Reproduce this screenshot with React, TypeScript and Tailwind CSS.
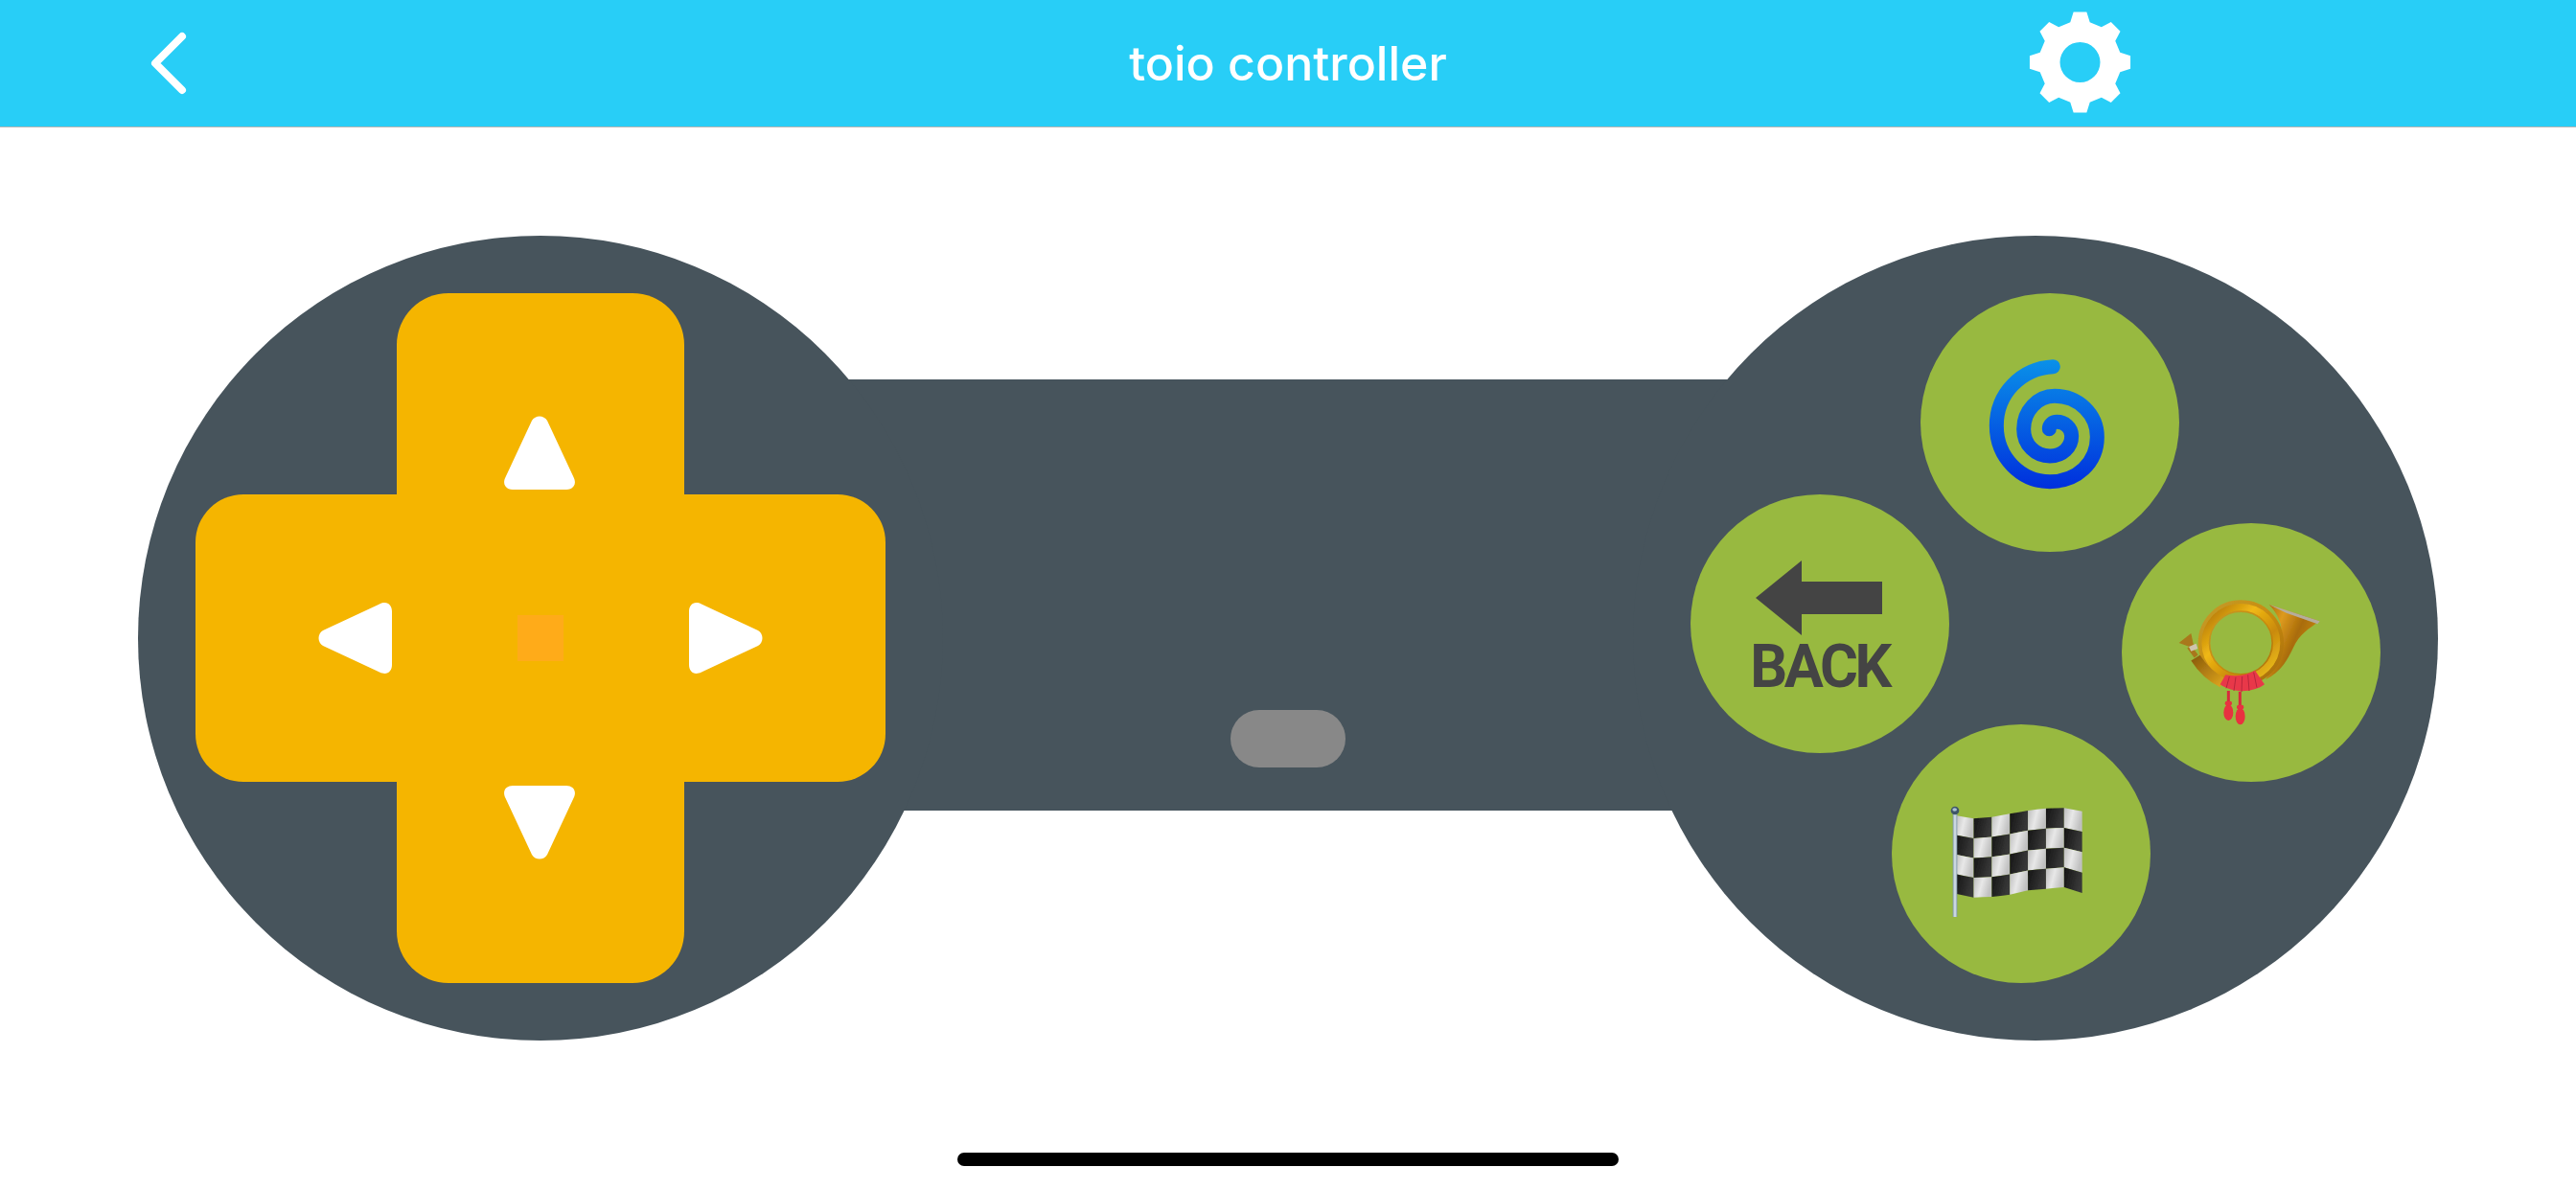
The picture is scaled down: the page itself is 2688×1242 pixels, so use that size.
const FLAG_TOP: [number, number][] = [[215,300],[270,310],[330,305],[385,295],[440,285],[500,278],[555,277],[611,287]];
const FLAG_BOT: [number, number][] = [[215,545],[270,557],[330,555],[385,548],[440,535],[500,530],[555,525],[611,543]];

function lerpEdge(edge: [number, number][], x: number) {
  for (let i = 0; i < edge.length - 1; i++) {
    if (x <= edge[i + 1][0]) {
      const t = (x - edge[i][0]) / (edge[i + 1][0] - edge[i][0]);
      return edge[i][1] + t * (edge[i + 1][1] - edge[i][1]);
    }
  }
  return edge[edge.length - 1][1];
}

function FlagIcon() {
  const cols = 7;
  const rows = 4;
  const cw = (611 - 215) / cols;
  const cells = [];
  for (let c = 0; c < cols; c++) {
    for (let r = 0; r < rows; r++) {
      const x0 = 215 + c * cw;
      const x1 = x0 + cw;
      const xm = (x0 + x1) / 2;
      const y = (x: number, k: number) => {
        const t = lerpEdge(FLAG_TOP, x);
        const b = lerpEdge(FLAG_BOT, x);
        return t + ((b - t) * k) / rows;
      };
      const pts = `${x0},${y(x0, r)} ${xm},${y(xm, r)} ${x1},${y(x1, r)} ${x1},${y(x1, r + 1)} ${xm},${y(xm, r + 1)} ${x0},${y(x0, r + 1)}`;
      cells.push(<polygon key={`${c}-${r}`} points={pts} fill={(c + r) % 2 === 0 ? "url(#flagLight)" : "url(#flagDark)"} />);
    }
  }
  return (
    <svg viewBox="0 0 840 840" className="w-[280px] h-[280px] shrink-0">
      <defs>
        <linearGradient id="flagLight" x1="0" y1="0" x2="1" y2="0.3">
          <stop offset="0" stopColor="#bcbcbc" />
          <stop offset="0.5" stopColor="#e8e8e8" />
          <stop offset="1" stopColor="#c0c0c0" />
        </linearGradient>
        <linearGradient id="flagDark" x1="0" y1="0" x2="1" y2="0.3">
          <stop offset="0" stopColor="#151515" />
          <stop offset="0.6" stopColor="#2a2a2a" />
          <stop offset="1" stopColor="#383838" />
        </linearGradient>
        <linearGradient id="pole" x1="0" y1="0" x2="1" y2="0">
          <stop offset="0" stopColor="#7f97a8" />
          <stop offset="0.5" stopColor="#dfe8ee" />
          <stop offset="1" stopColor="#7f97a8" />
        </linearGradient>
        <filter id="flagBlur" x="-5%" y="-5%" width="110%" height="110%">
          <feGaussianBlur stdDeviation="2" />
        </filter>
      </defs>
      <g filter="url(#flagBlur)">{cells}</g>
      <rect x="206" y="294" width="14" height="324" fill="url(#pole)" />
      <circle cx="213" cy="285" r="13" fill="#3f5568" />
      <ellipse cx="212" cy="282" rx="7" ry="5" fill="#a9c0d2" />
    </svg>
  );
}

function HornIcon() {
  return (
    <svg viewBox="0 0 840 840" className="w-[280px] h-[280px] shrink-0">
      <defs>
        <linearGradient id="ringBase" x1="0" y1="0" x2="1" y2="1">
          <stop offset="0" stopColor="#c39a28" />
          <stop offset="0.5" stopColor="#c98c10" />
          <stop offset="1" stopColor="#a86e08" />
        </linearGradient>
        <linearGradient id="ring" x1="0" y1="0" x2="1" y2="1">
          <stop offset="0" stopColor="#a96c08" />
          <stop offset="0.35" stopColor="#f0b814" />
          <stop offset="0.65" stopColor="#c98a0a" />
          <stop offset="1" stopColor="#f2c622" />
        </linearGradient>
        <linearGradient id="bell" x1="0" y1="0" x2="1" y2="0.6">
          <stop offset="0" stopColor="#a86606" />
          <stop offset="0.3" stopColor="#dd9a1e" />
          <stop offset="0.6" stopColor="#a96c0a" />
          <stop offset="1" stopColor="#cf9018" />
        </linearGradient>
        <linearGradient id="tube" x1="0" y1="0" x2="1" y2="1">
          <stop offset="0" stopColor="#8f5f0c" />
          <stop offset="1" stopColor="#d9a01c" />
        </linearGradient>
        <filter id="hornBlur" x="-5%" y="-5%" width="110%" height="110%">
          <feGaussianBlur stdDeviation="1.5" />
        </filter>
      </defs>
      <g filter="url(#hornBlur)">
        <path d="M476 270 L635 322 C600 345 570 365 552 405 C535 440 515 480 465 505 C510 440 525 380 512 330 C505 305 490 285 476 270 Z" fill="url(#bell)" />
        <path d="M476 270 L635 322 L628 331 L530 296 Z" fill="#b5ad9c" />
        <circle cx="388" cy="390" r="115" fill="none" stroke="url(#ringBase)" strokeWidth="38" />
        <circle cx="388" cy="390" r="112" fill="none" stroke="url(#ring)" strokeWidth="22" />
        <path d="M330 514 C295 497 268 472 246 437" fill="none" stroke="url(#tube)" strokeWidth="33" />
        <path d="M248 432 L226 402" fill="none" stroke="#a9761a" strokeWidth="15" />
        <path d="M194 390 L232 360 L242 407 Z" fill="#a9781a" />
        <path d="M225 402 L248 392 L253 408 L232 416 Z" fill="#cfc4ad" />
        <path d="M323 520 L340 490 C370 496 405 492 432 476 L462 520 C430 545 365 550 323 520 Z" fill="#e8384a" />
        <g stroke="#b8263a" strokeWidth="3" fill="none">
          <path d="M352 495 L342 532" />
          <path d="M372 497 L366 540" />
          <path d="M392 495 L390 543" />
          <path d="M410 490 L414 540" />
          <path d="M428 482 L438 530" />
        </g>
        <path d="M349 540 V578 M385 542 V590" stroke="#d8293c" strokeWidth="9" fill="none" />
        <ellipse cx="349" cy="608" rx="15" ry="25" fill="#e8303f" />
        <ellipse cx="386" cy="620" rx="15" ry="26" fill="#e8303f" />
        <rect x="338" y="572" width="22" height="14" rx="6" fill="#e8303f" />
        <rect x="375" y="584" width="22" height="14" rx="6" fill="#e8303f" />
      </g>
    </svg>
  );
}

function SpiralIcon() {
  return (
    <svg viewBox="0 0 840 840" className="w-[280px] h-[280px] shrink-0">
      <defs>
        <linearGradient id="spiral" gradientUnits="userSpaceOnUse" x1="0" y1="225" x2="0" y2="628">
          <stop offset="0" stopColor="#0a90e8" />
          <stop offset="1" stopColor="#002fdd" />
        </linearGradient>
      </defs>
      <path
        d="M430 245 C330 250 253 330 253 430 C253 530 330 605 420 605 C505 605 568 545 568 465 C568 395 510 337 435 337 C380 337 338 385 338 440 C338 490 375 525 420 525 C460 525 488 497 488 462 C488 435 465 418 442 418 C428 418 418 428 418 440"
        fill="none"
        stroke="url(#spiral)"
        strokeWidth="45"
        strokeLinecap="round"
      />
    </svg>
  );
}

function BackIcon() {
  return (
    <div className="flex flex-col items-center">
      <svg viewBox="0 0 132 78" className="w-[132px] h-[78px] mr-[2px]">
        <polygon points="0,39 48,0 48,22 132,22 132,56 48,56 48,78" fill="#444444" />
      </svg>
      <span className="mt-[10px] font-['Roboto',sans-serif] font-bold text-[63px] leading-[45px] tracking-[-3.5px] scale-x-[0.97] text-[#444444]">BACK</span>
    </div>
  );
}

function Triangle({ dir }: { dir: "up" | "down" | "left" | "right" }) {
  const rotate = { up: "rotate-0", right: "rotate-90", down: "rotate-180", left: "-rotate-90" }[dir];
  return (
    <svg viewBox="0 0 76 78" className={`w-[76px] h-[78px] ${rotate}`}>
      <path
        d="M30 5 C33.500 -1 42.500 -1 46 5 L73.500 64 C77.500 72 72.500 77 66 77 L10 77 C3.500 77 -1.500 72 2.500 64 Z"
        fill="#ffffff"
      />
    </svg>
  );
}

function Gear() {
  const cx = 53.5;
  const cy = 53;
  const teeth = 8;
  let d = "";
  for (let i = 0; i < teeth; i++) {
    const a = (i * 2 * Math.PI) / teeth - Math.PI / 2;
    const p = (r: number, da: number) => {
      const x = cx + r * Math.cos(a + da);
      const y = cy + r * Math.sin(a + da);
      return `${x.toFixed(2)} ${y.toFixed(2)}`;
    };
    d += `${i === 0 ? "M" : "L"}${p(43, -0.24)} L${p(53, -0.13)} L${p(53, 0.13)} L${p(43, 0.24)} `;
  }
  d += `Z M${cx + 21} ${cy} A21 21 0 1 0 ${cx - 21} ${cy} A21 21 0 1 0 ${cx + 21} ${cy} Z`;
  return (
    <svg viewBox="0 0 107 106" className="w-[107px] h-[106px] -mt-[2px]">
      <path d={d} fill="#ffffff" fillRule="evenodd" />
    </svg>
  );
}

function FaceButton({ className, children }: { className: string; children: React.ReactNode }) {
  return (
    <div className={`absolute w-[270px] h-[270px] rounded-full bg-[#98b940] flex items-center justify-center ${className}`}>
      {children}
    </div>
  );
}

export default function App() {
  return (
    <div className="w-[2688px] h-[1242px] bg-white flex flex-col overflow-hidden relative font-['Inter',sans-serif]">
      <header className="h-[133px] shrink-0 bg-[#28cef7] border-b border-[#b5b5b5] grid grid-cols-[1fr_auto_1fr] items-center">
        <div className="pl-[157px]">
          <svg viewBox="0 0 42 66" className="w-[42px] h-[66px]">
            <path d="M33 5 L5 33 L33 61" fill="none" stroke="#ffffff" strokeWidth="8" strokeLinecap="round" strokeLinejoin="round" />
          </svg>
        </div>
        <h1 className="text-white text-[50px] font-medium leading-none -mt-[1px]">toio controller</h1>
        <div className="flex justify-end pr-[464px]">
          <Gear />
        </div>
      </header>

      <main className="flex-1 flex items-start pt-[113px] px-[144px]">
        <section className="relative z-10 shrink-0 w-[840px] h-[840px] rounded-full bg-[#47545c] flex items-center justify-center">
          <div className="grid grid-cols-[210px_300px_210px] grid-rows-[210px_300px_210px]">
            <div />
            <div className="bg-[#f5b500] rounded-t-[54px] flex items-end justify-center pb-[4px] pr-[3px]">
              <Triangle dir="up" />
            </div>
            <div />
            <div className="bg-[#f5b500] rounded-l-[50px] flex items-center justify-end pr-[5px]">
              <Triangle dir="left" />
            </div>
            <div className="bg-[#f5b500] flex items-center justify-center">
              <div className="w-[48px] h-[48px] bg-[#ffab19]" />
            </div>
            <div className="bg-[#f5b500] rounded-r-[50px] flex items-center justify-start pl-[5px]">
              <Triangle dir="right" />
            </div>
            <div />
            <div className="bg-[#f5b500] rounded-b-[54px] flex items-start justify-center pt-[3px] pr-[3px]">
              <Triangle dir="down" />
            </div>
            <div />
          </div>
        </section>

        <section className="flex-1 h-[450px] mt-[150px] -mx-[100px] bg-[#47545c] flex items-end justify-center pb-[45px]">
          <div className="w-[120px] h-[60px] rounded-full bg-[#888888]" />
        </section>

        <section className="relative z-10 shrink-0 w-[840px] h-[840px] rounded-full bg-[#47545c]">
          <FaceButton className="left-[300px] top-[60px]"><SpiralIcon /></FaceButton>
          <FaceButton className="left-[60px] top-[270px]"><BackIcon /></FaceButton>
          <FaceButton className="left-[510px] top-[300px]"><HornIcon /></FaceButton>
          <FaceButton className="left-[270px] top-[510px]"><FlagIcon /></FaceButton>
        </section>
      </main>

      <footer className="h-[39px] shrink-0 flex justify-center">
        <div className="w-[690px] h-[14px] rounded-full bg-black" />
      </footer>
    </div>
  );
}
